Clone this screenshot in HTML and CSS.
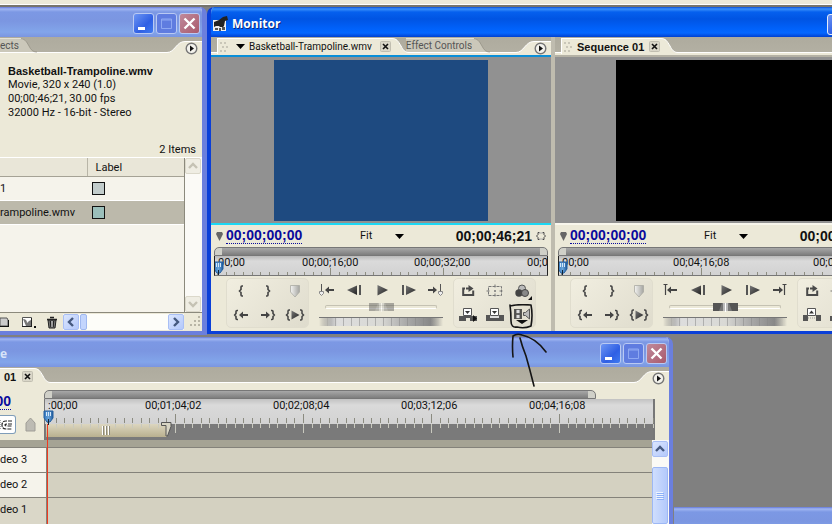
FILE: index.html
```html
<!DOCTYPE html>
<html lang="en">
<head>
<meta charset="utf-8">
<title>Monitor</title>
<link rel="stylesheet" href="styles.css">
</head>
<body>
<svg class="defs" aria-hidden="true">
  <defs>
    <linearGradient id="metal" x1="0" y1="0" x2="1" y2="1"><stop offset="0" stop-color="#777"/><stop offset="1" stop-color="#222"/></linearGradient>
    <linearGradient id="silver" x1="0" y1="0" x2="1" y2="0"><stop offset="0" stop-color="#f4f4f2"/><stop offset="1" stop-color="#a4a4a0"/></linearGradient>
    <linearGradient id="headblue" x1="0" y1="0" x2="1" y2="0"><stop offset="0" stop-color="#2f76bd"/><stop offset=".5" stop-color="#6aa5da"/><stop offset="1" stop-color="#1f5a9c"/></linearGradient>
    <pattern id="ticks-source" width="113" height="19" patternUnits="userSpaceOnUse"><path d="M9.500 16v3M17.500 16v3M26.500 16v3M35.500 16v3M43.500 16v3M52.500 16v3M61.500 16v3M70.500 16v3M78.500 16v3M87.500 16v3M96.500 16v3M104.500 16v3M.5 12v7" stroke="#8d8d80"/></pattern>
    <pattern id="ticks-sequence" width="140" height="19" patternUnits="userSpaceOnUse"><path d="M9.500 16v3M19.500 16v3M28.500 16v3M37.500 16v3M47.500 16v3M56.500 16v3M65.500 16v3M75.500 16v3M84.500 16v3M93.500 16v3M103.500 16v3M112.500 16v3M121.500 16v3M131.500 16v3M.5 12v7" stroke="#8d8d80"/></pattern>
    <pattern id="ticks-timeline" width="128" height="26" patternUnits="userSpaceOnUse">
      <path d="M9.500 4v5M17.500 4v5M26.500 4v5M34.500 4v5M43.500 4v5M51.500 4v5M60.500 4v5M68.500 4v5M77.500 4v5M85.500 4v5M94.500 4v5M102.500 4v5M111.500 4v5M119.500 4v5M.5 0v9" stroke="#8b8b80"/>
      <path d="M9.500 10v4M17.500 10v4M26.500 10v4M34.500 10v4M43.500 10v4M51.500 10v4M60.500 10v4M68.500 10v4M77.500 10v4M85.500 10v4M94.500 10v4M102.500 10v4M111.500 10v4M119.500 10v4M.5 10v9" stroke="#c9c9be"/>
    </pattern>
    <symbol id="i-brace-l" viewBox="0 0 20 20"><path d="M12 5h-1q-1 0-1 1v2.500L8.500 10l1.500 1.500V14q0 1 1 1h1" fill="none" stroke="#444" stroke-width="1.600"/></symbol>
    <symbol id="i-brace-r" viewBox="0 0 20 20"><path d="M8 5h1q1 0 1 1v2.500l1.500 1.500-1.500 1.500V14q0 1-1 1H8" fill="none" stroke="#444" stroke-width="1.600"/></symbol>
    <symbol id="i-marker" viewBox="0 0 20 20"><path d="M5.500 4.500h9V11L10 16l-4.500-5z" fill="url(#silver)" stroke="#aaa9a2" stroke-width=".8"/></symbol>
    <symbol id="i-go-in" viewBox="0 0 20 20"><path d="M7 5.500H6q-1 0-1 1v2L3.700 10 5 11.500v2q0 1 1 1h1" fill="none" stroke="#444" stroke-width="1.600"/><path d="M8 10l4-3.500v2.500h5v2h-5v2.500z" fill="#444"/></symbol>
    <symbol id="i-go-out" viewBox="0 0 20 20"><path d="M13 5.500h1q1 0 1 1v2l1.300 1.500L15 11.500v2q0 1-1 1h-1" fill="none" stroke="#444" stroke-width="1.600"/><path d="M12 10L8 6.500v2.500H3v2h5v2.500z" fill="#444"/></symbol>
    <symbol id="i-play-range" viewBox="0 0 20 20"><path d="M5 5H4Q3 5 3 6v2.500L1.500 10 3 11.500V14q0 1 1 1h1M15 5h1q1 0 1 1v2.500l1.500 1.500-1.500 1.500V14q0 1-1 1h-1" fill="none" stroke="#444" stroke-width="1.500"/><path d="M6.500 5.500l8 4.500-8 4.500z" fill="url(#metal)"/></symbol>
    <symbol id="i-prev-mark" viewBox="0 0 20 20"><path d="M4.500 4v8" stroke="#555" fill="none"/><path d="M2.500 11.500h4v2l-2 2-2-2z" fill="#eee" stroke="#888"/><path d="M8 10l4-3.500v2.500h5v2h-5v2.500z" fill="#444"/></symbol>
    <symbol id="i-next-mark" viewBox="0 0 20 20"><path d="M15.500 4v8" stroke="#555" fill="none"/><path d="M13.500 11.500h4v2l-2 2-2-2z" fill="#eee" stroke="#888"/><path d="M12 10L8 6.500v2.500H3v2h5v2.500z" fill="#444"/></symbol>
    <symbol id="i-prev-edit" viewBox="0 0 20 20"><path d="M2.500 4.500h4M4.500 4v11" stroke="#444" fill="none" stroke-width="1.200"/><path d="M6 10l4-3.500v2.500h6v2h-6v2.500z" fill="#444"/></symbol>
    <symbol id="i-next-edit" viewBox="0 0 20 20"><path d="M13.500 4.500h4M15.500 4v11" stroke="#444" fill="none" stroke-width="1.200"/><path d="M14 10l-4-3.500v2.500H4v2h6v2.500z" fill="#444"/></symbol>
    <symbol id="i-step-back" viewBox="0 0 20 20"><path d="M13 5.500v9.500L3 10z" fill="url(#metal)"/><path d="M16 5v10" stroke="#555" stroke-width="2"/></symbol>
    <symbol id="i-step-fwd" viewBox="0 0 20 20"><path d="M8 5.500v9.500L18 10z" fill="url(#metal)"/><path d="M5 5v10" stroke="#555" stroke-width="2"/></symbol>
    <symbol id="i-play" viewBox="0 0 20 20"><path d="M6.500 5v10.500L17 10z" fill="url(#metal)"/></symbol>
    <symbol id="i-loop" viewBox="0 0 20 20"><path d="M7 7.500H5.200V14h10V9.500M8 7.500h5" fill="none" stroke="#4a4a4a" stroke-width="2"/><path d="M10.500 4l5 3.500-5 3.500z" fill="#4a4a4a"/></symbol>
    <symbol id="i-safe" viewBox="0 0 20 20"><path d="M3.500 5.500h13v9h-13zM10 3.500v4m0 5v4M1.500 10h4m9 0h4M10 9v2M9 10h2" fill="none" stroke="#777" stroke-dasharray="3 1"/></symbol>
    <symbol id="i-output" viewBox="0 0 20 20"><circle cx="10" cy="7.500" r="3.500" fill="#bbb" stroke="#555"/><circle cx="7" cy="12" r="3.700" fill="#444"/><circle cx="13" cy="12" r="3.500" fill="#888" stroke="#444"/><path d="M20 15v4h-4z" fill="#111"/></symbol>
    <symbol id="i-insert" viewBox="0 0 20 20"><path d="M1 11h18v5H12v-3H8v3H1z" fill="#555"/><path d="M15 10l4 3.500-4 3.500z" fill="#111"/><path d="M5.500 3.500h8v7h-8z" fill="#fff" stroke="#555"/><path d="M7 6h5L9.500 9z" fill="#333"/></symbol>
    <symbol id="i-overlay" viewBox="0 0 20 20"><path d="M1 10h18v6H1z" fill="#555"/><path d="M5 10h9v3H5z" fill="#ddd"/><path d="M5.500 3.500h8v7h-8z" fill="#fff" stroke="#555"/><path d="M7 6h5L9.500 9z" fill="#333"/></symbol>
    <symbol id="i-lift" viewBox="0 0 20 20"><path d="M1 10h5v6H1zM14 10h5v6h-5z" fill="#555"/><path d="M6 13h8" stroke="#999" stroke-dasharray="1 1"/><path d="M5.500 3.500h8v7h-8z" fill="#fff" stroke="#555"/><path d="M7 8.500h5L9.500 5.500z" fill="#333"/></symbol>
    <symbol id="i-take" viewBox="0 0 20 20"><path d="M3 4v10M9 4v10" stroke="#333" stroke-width="1.600"/><path d="M4 4.500h4v4H4zM4 9.500h4v4H4z" fill="#ddd" stroke="#444" stroke-width=".8"/><path d="M11.500 7.500h2l4-3.500v10l-4-3.500h-2z" fill="#bbb" stroke="#555"/><path d="M4 15h12l-6 4z" fill="#111"/></symbol>
    <symbol id="i-disc" viewBox="0 0 13 13"><circle cx="6.500" cy="6.500" r="5.300" fill="#f3f2ec" stroke="#777" stroke-width="1.400"/><path d="M5 3.500v6l4-3z" fill="#111"/></symbol>
    <symbol id="i-x" viewBox="0 0 11 11"><rect x=".5" y=".5" width="10" height="10" rx="1" fill="#d9d6c8" stroke="#c1beb0"/><path d="M3 3l5 5M8 3L3 8" stroke="#111" stroke-width="1.600"/></symbol>
    <symbol id="i-min" viewBox="0 0 21 21"><path d="M5 14h7v3H5z" fill="#fff"/></symbol>
    <symbol id="i-max" viewBox="0 0 21 21"><path d="M5.500 6h10v9.500h-10zM5 7h11" fill="none" stroke="currentColor"/></symbol>
    <symbol id="i-close" viewBox="0 0 21 21"><path d="M5.500 5.500l10 10M15.500 5.500l-10 10" stroke="#fff" stroke-width="2.400"/></symbol>
    <symbol id="i-grip" viewBox="0 0 8 12"><path d="M0 1h2v2H0zM4 1h2v2H4zM2 5h2v2H2zM6 5h2v2H6zM0 9h2v2H0zM4 9h2v2H4z" fill="#c9c6b8"/></symbol>
    <symbol id="i-slope" viewBox="0 0 18 17"><path d="M0 1C6 1 7 4 10 9C12 13 14 15.500 18 15.500V17H0z" fill="#ece9d8"/><path d="M0 1.500C6 1.500 7 4 10 9C12 13 14 15.500 18 15.500" fill="none" stroke="#fff"/></symbol>
    <symbol id="i-slope-back" viewBox="0 0 18 17"><path d="M0 1C6 1 7 4 10 9C12 13 14 15 18 15H0z" fill="#cbc8ba"/><path d="M0 1.500C6 1.500 7 4 10 9C12 13 14 15 18 15" fill="none" stroke="#8f8c80" stroke-width=".7"/><path d="M0 1.500h2" stroke="#e4e1d4"/></symbol>
    <symbol id="i-rise" viewBox="0 0 18 17"><path d="M0 15.500C8 15.500 9 4.500 18 4.500V17H0z" fill="#ece9d8"/><path d="M0 15.500C8 15.500 9 4.500 18 4.500" fill="none" stroke="#fff"/></symbol>
    <symbol id="i-playhead" viewBox="0 0 11 15"><path d="M1 1h9v7l-3 4H4L1 8z" fill="url(#headblue)" stroke="#245f9f"/><path d="M3.500 2v4M5.500 2v4M7.500 2v4" stroke="#d5e8fa"/><path d="M5.500 9v6" stroke="#123"/></symbol>
    <symbol id="i-shuttle" viewBox="0 0 25 9"><rect width="25" height="8" fill="#777"/><path d="M0 0h9l-3 8H0zM25 0h-9l3 8h6z" fill="#555"/><path d="M10 0h5v8h-5z" fill="#bbb"/><path d="M12.500 0v9" stroke="#fff"/></symbol>
    <symbol id="i-chev" viewBox="0 0 16 16"><path d="M4 10l4-4 4 4" fill="none" stroke="currentColor" stroke-width="2.400"/></symbol>
  </defs>
</svg>

<main class="desktop">
  <div class="menu-edge"></div>

  <section class="window inactive project" aria-label="Project">
    <header class="titlebar">
      <div class="win-buttons">
        <button aria-label="Minimize"><svg><use href="#i-min"/></svg></button>
        <button class="dim" aria-label="Maximize"><svg><use href="#i-max"/></svg></button>
        <button class="close" aria-label="Close"><svg><use href="#i-close"/></svg></button>
      </div>
    </header>
    <div class="tabs">
      <button class="tab back">ects</button><svg class="slope"><use href="#i-slope-back"/></svg>
      <svg class="rise"><use href="#i-rise"/></svg><div class="tab-end"><button aria-label="Panel menu"><svg><use href="#i-disc"/></svg></button></div>
    </div>
    <div class="clip-info">
      <h2>Basketball-Trampoline.wmv</h2>
      <p>Movie, 320 x 240 (1.0)</p>
      <p>00;00;46;21, 30.00 fps</p>
      <p>32000 Hz - 16-bit - Stereo</p>
    </div>
    <p class="count">2 Items</p>
    <div class="bin">
      <div class="bin-list">
        <table>
          <thead><tr><th></th><th class="label-head">Label</th></tr></thead>
          <tbody>
            <tr><td>1</td><td><span class="swatch"></span></td></tr>
            <tr class="selected"><td>rampoline.wmv</td><td><span class="swatch teal"></span></td></tr>
          </tbody>
        </table>
      </div>
      <div class="scroll-v off">
        <button aria-label="Scroll up"><svg><use href="#i-chev"/></svg></button>
        <button class="down" aria-label="Scroll down"><svg><use href="#i-chev"/></svg></button>
      </div>
    </div>
    <footer class="bin-tools">
      <button aria-label="New bin"><svg width="9" height="16" viewBox="0 0 9 16"><path d="M0 4h7l1 2v6H0z" fill="#ccc" stroke="#555"/><path d="M0 12.500h9M8.500 6v7" stroke="#111"/></svg></button>
      <button aria-label="New item"><svg width="16" height="16" viewBox="0 0 16 16"><path d="M2.500 3.500h9v9h-9z" fill="#fff" stroke="#555"/><path d="M3 5q4 0 4 4l2-2 2-1v6H6z" fill="#777"/><path d="M2 12.500h10M11.500 4v9" stroke="#222"/><path d="M14 12h2v2h-2z" fill="#111"/></svg></button>
      <button aria-label="Delete"><svg width="14" height="16" viewBox="0 0 14 16"><path d="M3 6h8l-1 8H4z" fill="#777" stroke="#222"/><path d="M2 5.500h10M5 3.500h4M5.500 7l.5 6M8.500 7L8 13" stroke="#222" stroke-width="1.500" fill="none"/><path d="M7 7v6" stroke="#eee"/></svg></button>
      <div class="scroll-h">
        <button class="left" aria-label="Scroll left"><svg><use href="#i-chev"/></svg></button>
        <span class="thumb"></span>
        <button class="right" aria-label="Scroll right"><svg><use href="#i-chev"/></svg></button>
      </div>
      <svg width="12" height="12" viewBox="0 0 12 12"><path d="M8 0h2v2H8zM4 4h2v2H4zM8 4h2v2H8zM0 8h2v2H0zM4 8h2v2H4zM8 8h2v2H8z" fill="#b8b5a5"/></svg>
    </footer>
  </section>

  <section class="window active monitor" aria-label="Monitor">
    <header class="titlebar">
      <svg width="16" height="16" viewBox="0 0 16 16"><path d="M0 4h13v11H0z" fill="#eee"/><path d="M1 6l5-2 4-3 4-1 1 4-3 1-1 5-1 1H7l-1-1H3L1 11z" fill="#222"/><path d="M2 12h3v2H2zM6 12h2v3H6zM9 11h3v3H9z" fill="#555"/></svg>
      <h1>Monitor</h1>
      <div class="win-buttons">
        <button aria-label="Minimize"><svg><use href="#i-min"/></svg></button>
        <button aria-label="Maximize"><svg><use href="#i-max"/></svg></button>
        <button class="close" aria-label="Close"><svg><use href="#i-close"/></svg></button>
      </div>
    </header>
    <div class="views">
      <article class="view source">
        <div class="tabs">
          <div class="tab front"><svg class="grip"><use href="#i-grip"/></svg><button class="clip-menu"><svg width="9" height="5" viewBox="0 0 9 5"><path d="M0 0h9L4.500 5z"/></svg>Basketball-Trampoline.wmv</button><button aria-label="Close tab"><svg class="x"><use href="#i-x"/></svg></button></div><svg class="slope"><use href="#i-slope"/></svg><button class="tab back">Effect Controls</button><svg class="slope"><use href="#i-slope-back"/></svg>
          <svg class="rise"><use href="#i-rise"/></svg><div class="tab-end"><button aria-label="Panel menu"><svg><use href="#i-disc"/></svg></button></div>
        </div>
        <div class="screen"><div class="picture"></div></div>
        <div class="timebar">
          <svg class="pin" width="7" height="9" viewBox="0 0 7 9"><path d="M1 0h5l1 2-3.500 7L0 2z" fill="#666"/></svg>
          <a href="#" class="timecode">00;00;00;00</a>
          <span class="zoom"><select aria-label="Zoom level"><option>Fit</option></select><svg width="9" height="5" viewBox="0 0 9 5"><path d="M0 0h9L4.500 5z"/></svg></span>
          <span class="duration">00;00;46;21</span>
          <svg width="10" height="8" viewBox="0 0 10 8"><path d="M3.500 .5H2v2L.5 4 2 5.500v2h1.500M6.500 .5H8v2L9.500 4 8 5.500v2H6.500" fill="none" stroke="#444"/><path d="M3 1h4M3 7h4" stroke="#aaa"/></svg>
        </div>
        <div class="ruler">
          <div class="range"></div>
          <div class="scale">
            <svg class="ticks" width="100%" height="19"><rect width="100%" height="19" fill="url(#ticks-source)"/></svg>
            <div class="marks"><span>00;00</span><span>00;00;16;00</span><span>00;00;32;00</span><span>00;0</span></div>
            <svg class="playhead"><use href="#i-playhead"/></svg>
          </div>
        </div>
        <div class="controls">
          <div class="pad">
            <button aria-label="Set in point"><svg><use href="#i-brace-l"/></svg></button><button aria-label="Set out point"><svg><use href="#i-brace-r"/></svg></button><button aria-label="Set marker"><svg><use href="#i-marker"/></svg></button>
            <button aria-label="Go to in point"><svg><use href="#i-go-in"/></svg></button><button aria-label="Go to out point"><svg><use href="#i-go-out"/></svg></button><button aria-label="Play in to out"><svg><use href="#i-play-range"/></svg></button>
          </div>
          <div class="transport">
            <div class="keys"><button aria-label="Previous marker"><svg><use href="#i-prev-mark"/></svg></button><button aria-label="Step back"><svg><use href="#i-step-back"/></svg></button><button aria-label="Play"><svg><use href="#i-play"/></svg></button><button aria-label="Step forward"><svg><use href="#i-step-fwd"/></svg></button><button aria-label="Next marker"><svg><use href="#i-next-mark"/></svg></button></div>
            <div class="shuttle faded"><svg><use href="#i-shuttle"/></svg></div>
            <div class="jog"></div>
          </div>
          <div class="pad">
            <button aria-label="Loop"><svg><use href="#i-loop"/></svg></button><button aria-label="Safe margins"><svg><use href="#i-safe"/></svg></button><button aria-label="Output"><svg><use href="#i-output"/></svg></button>
            <button aria-label="Insert"><svg><use href="#i-insert"/></svg></button><button aria-label="Overlay"><svg><use href="#i-overlay"/></svg></button><button aria-label="Toggle take audio and video"><svg><use href="#i-take"/></svg></button>
          </div>
        </div>
      </article>

      <article class="view sequence">
        <div class="tabs">
          <div class="tab front"><svg class="grip"><use href="#i-grip"/></svg><button class="name">Sequence 01</button><button aria-label="Close tab"><svg class="x"><use href="#i-x"/></svg></button></div><svg class="slope"><use href="#i-slope"/></svg>
        </div>
        <div class="screen"><div class="picture"></div></div>
        <div class="timebar">
          <svg class="pin" width="7" height="9" viewBox="0 0 7 9"><path d="M1 0h5l1 2-3.500 7L0 2z" fill="#666"/></svg>
          <a href="#" class="timecode">00;00;00;00</a>
          <span class="zoom"><select aria-label="Zoom level"><option>Fit</option></select><svg width="9" height="5" viewBox="0 0 9 5"><path d="M0 0h9L4.500 5z"/></svg></span>
          <span class="duration">00;00;00;00</span>
          <svg width="10" height="8"></svg>
        </div>
        <div class="ruler">
          <div class="range"></div>
          <div class="scale">
            <svg class="ticks" width="100%" height="19"><rect width="100%" height="19" fill="url(#ticks-sequence)"/></svg>
            <div class="marks"><span>00;00</span><span>00;04;16;08</span><span>00;08;32;16</span></div>
            <svg class="playhead"><use href="#i-playhead"/></svg>
          </div>
        </div>
        <div class="controls">
          <div class="pad">
            <button aria-label="Set in point"><svg><use href="#i-brace-l"/></svg></button><button aria-label="Set out point"><svg><use href="#i-brace-r"/></svg></button><button aria-label="Set marker"><svg><use href="#i-marker"/></svg></button>
            <button aria-label="Go to in point"><svg><use href="#i-go-in"/></svg></button><button aria-label="Go to out point"><svg><use href="#i-go-out"/></svg></button><button aria-label="Play in to out"><svg><use href="#i-play-range"/></svg></button>
          </div>
          <div class="transport">
            <div class="keys"><button aria-label="Previous edit"><svg><use href="#i-prev-edit"/></svg></button><button aria-label="Step back"><svg><use href="#i-step-back"/></svg></button><button aria-label="Play"><svg><use href="#i-play"/></svg></button><button aria-label="Step forward"><svg><use href="#i-step-fwd"/></svg></button><button aria-label="Next edit"><svg><use href="#i-next-edit"/></svg></button></div>
            <div class="shuttle"><svg><use href="#i-shuttle"/></svg></div>
            <div class="jog"></div>
          </div>
          <div class="pad">
            <button aria-label="Loop"><svg><use href="#i-loop"/></svg></button><button aria-label="Safe margins"><svg><use href="#i-safe"/></svg></button><button aria-label="Output"><svg><use href="#i-output"/></svg></button>
            <button aria-label="Lift"><svg><use href="#i-lift"/></svg></button><button aria-label="Extract"><svg><use href="#i-insert"/></svg></button><button aria-label="Trim"><svg><use href="#i-overlay"/></svg></button>
          </div>
        </div>
      </article>
    </div>
  </section>

  <section class="window inactive timeline" aria-label="Timeline">
    <header class="titlebar">
      <h1>e</h1>
      <div class="win-buttons">
        <button aria-label="Minimize"><svg><use href="#i-min"/></svg></button>
        <button class="dim" aria-label="Maximize"><svg><use href="#i-max"/></svg></button>
        <button class="close" aria-label="Close"><svg><use href="#i-close"/></svg></button>
      </div>
    </header>
    <div class="tabs">
      <div class="tab front"><button class="name">01</button><button aria-label="Close tab"><svg class="x"><use href="#i-x"/></svg></button></div><svg class="slope"><use href="#i-slope"/></svg>
      <svg class="rise"><use href="#i-rise"/></svg><div class="tab-end"><button aria-label="Panel menu"><svg><use href="#i-disc"/></svg></button></div>
    </div>
    <div class="time-head">
      <div class="time-tools">
        <a href="#" class="timecode">00</a>
        <div class="snap-row">
          <button class="snap" aria-label="Snap"><svg width="13" height="14" viewBox="0 0 13 14"><path d="M12 3H6Q2 3 2 7t4 4h6M12 6H7q-2 0-2 1t2 1h5" fill="none" stroke="#222" stroke-width="1.200" stroke-dasharray="4 1"/><path d="M0 2v10" stroke="#555" stroke-dasharray="1 1"/></svg></button>
          <button aria-label="Set marker"><svg width="11" height="15" viewBox="0 0 11 15"><path d="M1 14V6l4.500-5L10 6v8z" fill="#bdbbb3" stroke="#9f9d96"/></svg></button>
        </div>
      </div>
      <div class="time-ruler">
        <div class="range"></div>
        <div class="time-scale">
          <div class="marks"><span>:00;00</span><span>00;01;04;02</span><span>00;02;08;04</span><span>00;03;12;06</span><span>00;04;16;08</span></div>
          <div class="work">
            <svg class="ticks" width="100%" height="26"><rect width="100%" height="26" fill="url(#ticks-timeline)"/></svg>
            <div class="work-bar"><svg width="9" height="9" viewBox="0 0 9 9"><path d="M.5 0v9M3.500 0v9M6.500 0v9" stroke="#fff"/><path d="M1.500 0v9M4.500 0v9M7.500 0v9" stroke="#8c8877"/></svg></div>
            <svg class="work-end" width="11" height="16" viewBox="0 0 11 16"><path d="M.5 1.500h9.500v4L6.500 15H5V4.500H.5z" fill="#d8d5c4" stroke="#555"/></svg>
          </div>
          <svg class="playhead"><use href="#i-playhead"/></svg>
        </div>
      </div>
    </div>
    <div class="tracks">
      <div class="track-list">
        <div class="track-gap"></div>
        <div class="track"><span>deo 3</span><div></div></div>
        <div class="track"><span>deo 2</span><div></div></div>
        <div class="track target"><span>deo 1</span><div></div></div>
        <div class="cti"></div>
      </div>
      <div class="scroll-v">
        <button aria-label="Scroll up"><svg><use href="#i-chev"/></svg></button>
        <span class="thumb"><svg width="8" height="8" viewBox="0 0 8 8"><path d="M0 .5h7M0 2.500h7M0 4.500h7M0 6.500h7" stroke="#eef4fe"/><path d="M1 1.500h7M1 3.500h7M1 5.500h7M1 7.500h7" stroke="#8cb0f8"/></svg></span>
      </div>
    </div>
  </section>

  <section class="window inactive lower" aria-label="Tools"><header class="titlebar"></header></section>

  <svg class="ink" width="42" height="86" viewBox="0 0 42 86" aria-hidden="true"><path d="M2 2Q10 0 23 1q2 10 0 21-7 3-14 1-6 1-6-6Q3 8 2 1M5 53Q4 42 5 32q4-3 9-1 14 3 24 17M12 34q2 8 6 18 4 14 8 30" fill="none" stroke="#151515" stroke-width="1.600" stroke-linecap="round" stroke-linejoin="round"/></svg>
</main>
</body>
</html>
```
FILE: styles.css
```css
* { box-sizing: border-box; }
html, body { height: 100%; }
body {
  margin: 0;
  overflow: hidden;
  background: #808080;
  color: #111;
  font: 10px/14px Roboto, "Liberation Sans", sans-serif;
}
h1, h2, p { margin: 0; font-size: inherit; }
svg { display: block; flex: none; }
button { padding: 0; border: 0; background: none; font: inherit; color: inherit; }
.defs { position: absolute; width: 0; height: 0; }
.desktop { position: relative; height: 100%; overflow: hidden; }
.menu-edge { height: 7px; background: #ece9d8; border-bottom: 2px solid #77756c; box-shadow: inset 0 -1px #fff; }

/* windows */
.window { position: absolute; display: flex; flex-direction: column; background: #ece9d8; border: 0 solid; border-radius: 7px 7px 0 0; overflow: hidden; }
.project { top: 7px; left: 0; width: 207px; height: 328px; border-width: 0 5px 4px 0; border-radius: 0 7px 0 0; }
.monitor { top: 7px; left: 207px; right: -67px; height: 327px; border-width: 0 4px 3px 4px; }
.timeline { top: 337px; left: 0; width: 673px; bottom: -20px; border-width: 0 4px 4px 0; border-radius: 0 7px 0 0; }
.lower { top: 507px; left: 674px; right: 0; bottom: 0; border-radius: 0; }
.active { border-color: #0a3fd8; }
.inactive { border-color: #6b7fdd; }
.titlebar { flex: none; display: flex; align-items: center; gap: 3px; height: 30px; color: #fff; }
.active .titlebar { margin: 0 -4px; padding: 4px 5px 0 6px; background: linear-gradient(#0a50d8, #3a90fa 2px, #0560ee 5px, #0054e3 12px, #0062fb 22px, #0567ff 26px, #0040d0 30px); }
.inactive .titlebar { margin-right: -5px; padding: 3px 7px 0 0; background: linear-gradient(#6478d8, #a0b6f2 2px, #7c98e4 5px, #7b96e1 14px, #82a5ea 25px, #7b95e0 30px); }
.timeline .titlebar { margin-right: -4px; padding-right: 6px; }
.titlebar h1 { font: 700 12px/16px "Open Sans", sans-serif; text-shadow: 1px 1px #0a2a80; }
.inactive h1 { color: #d8e4f8; text-shadow: none; }
.win-buttons { display: flex; gap: 2px; margin-left: auto; }
.win-buttons button { width: 21px; height: 21px; border: 1px solid #e4ecfb; border-radius: 3px; background: linear-gradient(135deg, #6d95f3, #2f5fe4 60%, #3f7af0); color: #fff; }
.inactive .win-buttons button { border-color: #b9c9f3; }
.win-buttons svg { width: 21px; height: 21px; margin: -1px; }
.win-buttons .dim { background: #5f7ce0; color: #8ea8f2; }
.win-buttons .close { background: linear-gradient(135deg, #c08a9c, #a95a6c); }

/* tabs */
.tabs { flex: none; display: flex; height: 16px; background: linear-gradient(#aeab9e, #b3b0a3); box-shadow: inset 0 -1px #fff; }
.tab { display: flex; align-items: center; height: 16px; border-top: 1px solid #fff; white-space: nowrap; }
.tab.front { background: #ece9d8; margin-top: 1px; }
.tab.back { background: #cbc8ba; color: #555; height: 14px; margin-top: 1px; border-color: #e4e1d4; }
.slope { width: 18px; height: 17px; position: relative; }
.rise { width: 18px; height: 17px; margin-left: auto; }
.tab-end { display: flex; margin-top: 4px; height: 13px; padding-right: 4px; border-top: 1px solid #fff; background: #ece9d8; }
.tab-end svg { width: 13px; height: 13px; position: relative; }
.tab .x { width: 11px; height: 11px; }
.tab .grip { width: 8px; height: 12px; }
.name { font: bold 11px/14px "Liberation Sans", sans-serif; color: #111; }

/* project */
.clip-info { padding: 11px 0 0 8px; font-size: 11px; white-space: nowrap; }
.clip-info h2 { font: bold 11px/14px "Liberation Sans", sans-serif; }
.count { padding: 23px 6px 0 0; font-size: 11px; text-align: right; }
.bin { flex: 1; display: flex; border-top: 1px solid #fff; border-bottom: 1px solid #8b897c; min-height: 0; }
.bin-list { flex: 1; background: #f5f3eb; border-right: 1px solid #8b897c; font-size: 11px; }
table { width: 100%; border-collapse: collapse; table-layout: fixed; }
th, td { padding: 0; height: 24px; text-align: left; font-weight: normal; }
th { height: 18px; padding-top: 3px; background: #e9e6d8; border-bottom: 1px solid #a5a295; }
th:first-child { width: 87px; }
.label-head { border-left: 1px solid #b8b5a7; padding-left: 8px; }
td { border-bottom: 1px solid #fff; white-space: nowrap; }
td:first-child { padding-top: 2px; }
td + td { padding-left: 5px; }
.selected { background: #bcb9ab; }
.swatch { display: block; width: 13px; height: 13px; border: 1px solid #111; background: #c2cccb; }
.swatch.teal { background: #9bbfbb; }
.bin-tools { flex: none; display: flex; align-items: center; height: 18px; padding-bottom: 1px; }
.bin-tools > button + button { margin-left: 11px; }
.bin-tools > button:nth-child(3) { margin-left: 9px; }
.scroll-h { flex: 1; display: flex; margin: 0 6px 0 4px; background: #fdfdf9; }
.scroll-h .right { margin-left: auto; }
.scroll-h .thumb { width: 7px; margin-left: 1px; background: #c3d5fd; border: 1px solid #9fb8f0; border-radius: 2px; }

/* scrollbars */
.scroll-v { display: flex; flex-direction: column; width: 17px; background: #fbfaf6; }
.scroll-v button, .scroll-h button { width: 16px; height: 16px; border: 1px solid #a9bff5; border-radius: 2px; background: linear-gradient(135deg, #dbe6fe, #b3c8fb); color: #45597f; }
.scroll-v button svg, .scroll-h button svg { width: 16px; height: 16px; margin: -1px; }
.scroll-v .down { margin-top: auto; }
.scroll-v .down svg { transform: rotate(180deg); }
.scroll-v.off button { background: #efede3; border-color: #dbd8ca; color: #c5c2b4; }
.left svg { transform: rotate(-90deg); }
.right svg { transform: rotate(90deg); }

/* monitor */
.views { flex: 1; display: flex; gap: 4px; background: linear-gradient(90deg, #b5b2a5, #c9c6b9); min-height: 0; }
.view { flex: 1; min-width: 0; background: #ece9d8; display: flex; flex-direction: column; }
.view .tabs { padding-left: 6px; }
.view .tab.front { padding-left: 2px; border-left: 1px solid #fff; }
.source .tab.front { gap: 8px; }
.sequence .tab.front { gap: 5px; }
.clip-menu { display: flex; align-items: center; gap: 4px; }
.view .tab.back { margin-left: -3px; }
.screen { margin-top: 2px; border-top: 2px solid #0a8fd8; border-bottom: 2px solid #1cd8f4; background: #919191; padding: 3px 63px 2px; }
.picture { height: 161px; background: #1e4a80; }
.sequence .screen { border-color: #b5b2a5 #919191 #f8f6ec; padding-left: 61px; padding-right: 61px; }
.sequence .picture { background: #000; }
.timebar { display: flex; align-items: center; height: 22px; padding: 0 5px; }
.pin { margin-right: 3px; }
.timecode { color: #0a0a9c; font: bold 14px/15px "Liberation Sans", sans-serif; text-decoration: none; border-bottom: 1px dotted #0a0a9c; }
.duration { font: bold 14px/16px "Liberation Sans", sans-serif; margin-right: 4px; }
.zoom { display: flex; align-items: center; width: 50px; margin: 0 auto; padding-left: 6px; }
.zoom select { flex: 1; min-width: 0; padding: 0; border: 0; background: none; appearance: none; font: 11px/14px Roboto, sans-serif; color: #111; }
.ruler { margin: 0 3px; }
.range { height: 9px; border: 1px solid #777; border-radius: 5px 5px 0 0; background: linear-gradient(90deg, #d0d0c8 7px, transparent 7px calc(100% - 7px), #d0d0c8 calc(100% - 7px)), linear-gradient(#a8a8a8, #7d7d7d); }
.scale { position: relative; height: 20px; border: 1px solid #222; border-width: 0 1px 1px; border-bottom-color: #777; background: linear-gradient(#b9b9b9, #dadada 5px, #d2d2d2); overflow: hidden; }
.scale .ticks { position: absolute; left: 2px; top: 0; }
.marks { display: grid; font-size: 11px; line-height: 14px; white-space: nowrap; position: relative; }
.source .marks { grid-template-columns: 84px 112px 113px 1fr; padding-left: 3px; }
.sequence .marks { grid-template-columns: 111px 140px 1fr; padding-left: 3px; }
.playhead { position: absolute; left: -2px; top: 5px; width: 11px; height: 15px; }
.controls { display: flex; gap: 4px; padding: 2px 15px 0; }
.pad { width: 83px; height: 50px; display: grid; grid-template: repeat(2, 1fr) / repeat(3, 1fr); place-items: center; border: 1px solid #e0ddce; border-radius: 5px; background: linear-gradient(135deg, #f1eee0, #dfdccd); }
.pad svg, .keys svg { width: 20px; height: 20px; }
.transport { flex: 1; }
.keys { display: grid; grid-template-columns: repeat(5, 1fr); justify-items: center; padding-top: 2px; }
.shuttle { height: 4px; margin: 5px 12px 0; border: 1px solid #c4c1b2; border-bottom-color: #fff; border-radius: 2px; display: flex; justify-content: center; align-items: center; }
.shuttle svg { width: 25px; height: 9px; }
.faded svg { opacity: .45; }
.jog { height: 9px; margin: 8px 6px 0; border-top: 1px solid #777; background:
  linear-gradient(90deg, #ece9d8, transparent 10%, transparent 90%, #ece9d8),
  repeating-linear-gradient(90deg, #8888 0 1px, transparent 1px 8px),
  linear-gradient(90deg, #777, #ddd 15%, #d9d9d5 50%, #aaa 70%, #777); }

/* timeline */
.timeline .tab.front { padding-left: 4px; gap: 6px; }
.time-head { flex: none; display: flex; height: 57px; padding-right: 14px; }
.time-tools { width: 44px; padding-top: 11px; }
.time-tools .timecode { display: block; width: 11px; direction: rtl; overflow: hidden; }
.snap-row { display: flex; gap: 9px; align-items: center; margin-top: 5px; }
.snap { width: 16px; height: 19px; border: 1px solid #7f9db9; border-left: 0; border-radius: 0 3px 3px 0; background: #fff; }
.time-ruler { flex: 1; padding-top: 7px; }
.time-ruler .range { width: 552px; max-width: 91%; }
.time-scale { position: relative; height: 41px; border-left: 1px solid #777; border-right: 2px solid #777; background: linear-gradient(#c2c2c2, #dadada 6px, #d2d2d2 25px); }
.time-scale .marks { grid-template-columns: 97px repeat(3, 128px) 1fr; padding-left: 3px; height: 25px; }
.work { position: relative; display: flex; height: 16px; background: #7a7a7a; }
.work-bar { width: 121px; margin-left: 1px; height: 13px; display: flex; align-items: center; justify-content: center; background: linear-gradient(#dcd6bf, #b9b08f); }
.work-bar svg, .work-end { position: relative; }
.work-end { margin: -3px 0 0 -6px; }
.work .ticks { position: absolute; left: 2px; bottom: 0; }
.time-scale .playhead { top: 11px; }
.tracks { flex: 1; display: flex; }
.track-list { position: relative; flex: 1; }
.track-gap { height: 8px; background: #a5a394; border-bottom: 1px solid #84827a; }
.track { display: flex; height: 25px; border-bottom: 1px solid #84827a; background: #d4d1c1; line-height: 24px; font-size: 11px; }
.track span { width: 47px; background: #f5f3eb; border-right: 1px solid #84827a; }
.track.target { height: 60px; }
.track.target span { background: #dad7c8; }
.cti { position: absolute; z-index: 1; left: 47px; top: -16px; bottom: 0; width: 1px; background: #f03a20; }
.tracks .scroll-v { padding-top: 1px; }
.tracks .thumb { display: flex; align-items: center; justify-content: center; width: 16px; height: 57px; margin-top: 10px; border: 1px solid #9db8f5; border-radius: 2px; background: linear-gradient(90deg, #cfdefe, #b3c9fb); }

.ink { position: absolute; left: 508px; top: 304px; }
```
